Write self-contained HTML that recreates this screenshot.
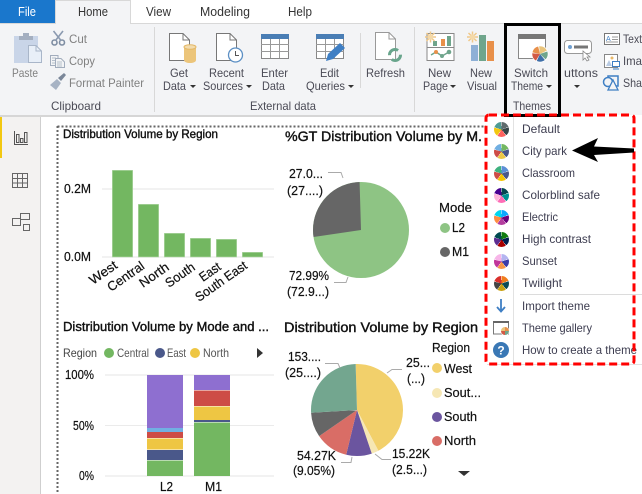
<!DOCTYPE html>
<html><head><meta charset="utf-8">
<style>
html,body{margin:0;padding:0;background:#fff;width:642px;height:494px;overflow:hidden}
svg{position:absolute;left:0;top:0;font-family:"Liberation Sans",sans-serif}
.r{font-size:12px;fill:#4a4a55}
.g{font-size:12px;fill:#808080}
.t{font-size:13px;fill:#333}
.c{font-size:13px;fill:#111;stroke:#111;stroke-width:.2}
.h{fill:#111;stroke:#111;stroke-width:.4}
.m{font-size:12px;fill:#3d3d50}
.ti{position:absolute;left:494px;width:15px;height:15px;border-radius:50%}
</style></head><body>
<svg width="642" height="494" viewBox="0 0 642 494">
<rect width="642" height="494" fill="#fff"/>
<!-- ribbon -->
<rect x="0" y="24" width="642" height="91" fill="#f3f4f6"/>
<rect x="0" y="23" width="642" height="1" fill="#d8d8d8"/>
<rect x="0" y="115" width="642" height="2" fill="#d6d6d6"/>
<rect x="0" y="0" width="55" height="23" fill="#1a77cc"/>
<path d="M55.500 24V0.500H130.500V24" fill="#f3f4f6" stroke="#d8d8d8"/>
<text x="18" y="16" class="t" style="fill:#fff" textLength="18" lengthAdjust="spacingAndGlyphs">File</text>
<text x="78" y="16" class="t" textLength="30" lengthAdjust="spacingAndGlyphs">Home</text>
<text x="146" y="16" class="t" textLength="25" lengthAdjust="spacingAndGlyphs">View</text>
<text x="200" y="16" class="t" textLength="50" lengthAdjust="spacingAndGlyphs">Modeling</text>
<text x="288" y="16" class="t" textLength="24" lengthAdjust="spacingAndGlyphs">Help</text>
<!-- separators -->
<rect x="154" y="27" width="1" height="85" fill="#d8d8d8"/>
<rect x="360" y="33" width="1" height="55" fill="#d8d8d8"/>
<rect x="414" y="27" width="1" height="85" fill="#d8d8d8"/>
<!-- paste icon -->
<rect x="14" y="36" width="24" height="27" fill="#c9d5e8"/>
<path d="M19 40V36H23V33H29V36H33V40Z" fill="#a4afc0"/>
<path d="M28.500 45.500H36L41.500 51V62.500H28.500Z" fill="#e8eff8" stroke="#a9b6c9"/>
<path d="M36 45.500V51H41.500" fill="none" stroke="#a9b6c9"/>
<!-- scissors -->
<g fill="none" stroke="#7f8ea3" stroke-width="1.600"><circle cx="54.500" cy="42.500" r="2.500"/><circle cx="62" cy="42.500" r="2.500"/><path d="M55.500 40.500 63 31M61 40.500 53.500 31" stroke="#8b9ab0"/></g>
<!-- copy -->
<g fill="#f3f4f6" stroke="#a2adbd"><path d="M50.500 55.500H58V65.500H50.500Z"/><path d="M55.500 58.500H61L64.500 62V67.500H55.500Z"/><path d="M52 58H56M52 60.500H55M52 63H55M57 62H62M57 64H62M57 66H62" stroke-width=".8"/></g>
<!-- painter -->
<path d="M50 85 57 79 61 83 56 90Z" fill="#a7b3c4"/><path d="M58 78 64 73 66 75 61 81Z" fill="#7b8799"/>
<text x="12" y="77" class="g" textLength="26" lengthAdjust="spacingAndGlyphs">Paste</text>
<text x="69" y="43" class="g" textLength="18" lengthAdjust="spacingAndGlyphs">Cut</text>
<text x="69" y="65" class="g" textLength="26" lengthAdjust="spacingAndGlyphs">Copy</text>
<text x="69" y="87" class="g" textLength="75" lengthAdjust="spacingAndGlyphs">Format Painter</text>
<text x="51" y="110" class="r" textLength="50" lengthAdjust="spacingAndGlyphs">Clipboard</text>
<!-- get data -->
<path d="M169.500 33.500H183L189.500 40V60.500H169.500Z" fill="#fff" stroke="#777"/><path d="M183 33.500V40H189.500" fill="none" stroke="#777"/>
<path d="M184 47V60C184 64 196 64 196 60V47Z" fill="#ecc57a"/><ellipse cx="190" cy="47" rx="6" ry="2.300" fill="#f3dcae" stroke="#e3b868"/>
<text x="170" y="77" class="r" textLength="18" lengthAdjust="spacingAndGlyphs">Get</text>
<text x="163" y="90" class="r" textLength="23" lengthAdjust="spacingAndGlyphs">Data</text>
<path d="M190 85h6l-3 3z" fill="#333"/>
<!-- recent -->
<path d="M216.500 33.500H230L236.500 40V60.500H216.500Z" fill="#fff" stroke="#777"/><path d="M230 33.500V40H236.500" fill="none" stroke="#777"/>
<circle cx="235.500" cy="55" r="7" fill="#fff" stroke="#5b8fc4" stroke-width="1.300"/><path d="M235.500 51V55.500H239" fill="none" stroke="#555"/>
<text x="209" y="77" class="r" textLength="35" lengthAdjust="spacingAndGlyphs">Recent</text>
<text x="203" y="90" class="r" textLength="40" lengthAdjust="spacingAndGlyphs">Sources</text>
<path d="M246 85h6l-3 3z" fill="#333"/>
<!-- enter data -->
<rect x="261.500" y="34.500" width="27" height="24" fill="#fff" stroke="#888"/><rect x="261" y="34" width="28" height="5" fill="#4a7eb5"/>
<path d="M261 44.500H289M261 51.500H289M270.500 39V58M279.500 39V58" stroke="#999"/>
<text x="261" y="77" class="r" textLength="27" lengthAdjust="spacingAndGlyphs">Enter</text>
<text x="262" y="90" class="r" textLength="23" lengthAdjust="spacingAndGlyphs">Data</text>
<!-- edit queries -->
<rect x="316.500" y="34.500" width="27" height="24" fill="#fff" stroke="#888"/><rect x="316" y="34" width="28" height="5" fill="#4a7eb5"/>
<path d="M316 44.500H344M316 51.500H344M325.500 39V58M334.500 39V58" stroke="#999"/>
<path d="M326 61 328 54 340 43 345 48 333 59Z" fill="#3f7fc4"/>
<text x="320" y="77" class="r" textLength="19" lengthAdjust="spacingAndGlyphs">Edit</text>
<text x="306" y="90" class="r" textLength="39" lengthAdjust="spacingAndGlyphs">Queries</text>
<path d="M348 85h6l-3 3z" fill="#333"/>
<!-- refresh -->
<path d="M375.500 32.500H389L395.500 39V59.500H375.500Z" fill="#fff" stroke="#999"/><path d="M389 32.500V39H395.500" fill="none" stroke="#999"/>
<circle cx="395" cy="55" r="5.500" fill="none" stroke="#68a58c" stroke-width="3" stroke-dasharray="12 5"/>
<text x="366" y="77" class="r" textLength="39" lengthAdjust="spacingAndGlyphs">Refresh</text>
<!-- new page -->
<rect x="427" y="33.500" width="27" height="27" fill="#fff" stroke="#888"/><path d="M427 47.500H454" stroke="#888"/>
<rect x="433" y="41" width="4" height="5" fill="#6fa58c"/><rect x="441" y="39" width="4" height="7" fill="#e8904a"/><rect x="447" y="36" width="4" height="10" fill="#6fa58c"/>
<path d="M431 55 436 52 442 56 449 52" fill="none" stroke="#6fa58c" stroke-width="1.400"/><circle cx="436" cy="52" r="2" fill="#e8904a"/><circle cx="442" cy="56" r="2" fill="#6fa58c"/><circle cx="449" cy="52" r="2.300" fill="#6fa58c"/>
<g stroke="#efc88a" stroke-width="1.500"><path d="M425 37H436M430.500 31.500V42.500M426.500 33 434.500 41M434.500 33 426.500 41"/></g><circle cx="430.500" cy="37" r="2.800" fill="#f4d9a8"/>
<text x="428" y="77" class="r" textLength="23" lengthAdjust="spacingAndGlyphs">New</text>
<text x="423" y="90" class="r" textLength="25" lengthAdjust="spacingAndGlyphs">Page</text>
<path d="M450 85h6l-3 3z" fill="#333"/>
<!-- new visual -->
<rect x="471" y="45" width="7" height="16" fill="#8eb0d6"/><rect x="479" y="35" width="7" height="26" fill="#6fa58c"/><rect x="487" y="41" width="7" height="20" fill="#e8904a"/>
<g stroke="#efc88a" stroke-width="1.500"><path d="M467 37H478M472.500 31.500V42.500M468.500 33 476.500 41M476.500 33 468.500 41"/></g><circle cx="472.500" cy="37" r="2.800" fill="#f4d9a8"/>
<text x="470" y="77" class="r" textLength="22" lengthAdjust="spacingAndGlyphs">New</text>
<text x="467" y="90" class="r" textLength="30" lengthAdjust="spacingAndGlyphs">Visual</text>
<!-- switch theme -->
<rect x="518.500" y="34.500" width="27" height="24" fill="#fff" stroke="#888"/><rect x="518" y="34" width="28" height="5" fill="#777"/>
<circle cx="540" cy="54" r="8.500" fill="#fff"/>
<g fill="none" stroke-width="7.500" transform="rotate(-90 540 54)"><circle cx="540" cy="54" r="4" stroke="#e9c47c" pathLength="100" stroke-dasharray="18 82"/><circle cx="540" cy="54" r="4" stroke="#6fa58c" pathLength="100" stroke-dasharray="18 82" stroke-dashoffset="-20"/><circle cx="540" cy="54" r="4" stroke="#3f6fa8" pathLength="100" stroke-dasharray="18 82" stroke-dashoffset="-40"/><circle cx="540" cy="54" r="4" stroke="#d25a45" pathLength="100" stroke-dasharray="18 82" stroke-dashoffset="-60"/><circle cx="540" cy="54" r="4" stroke="#e8904a" pathLength="100" stroke-dasharray="18 82" stroke-dashoffset="-80"/></g>
<text x="514" y="77" class="r" textLength="34" lengthAdjust="spacingAndGlyphs">Switch</text>
<text x="511" y="90" class="r" textLength="32" lengthAdjust="spacingAndGlyphs">Theme</text>
<path d="M546 85h6l-3 3z" fill="#333"/>
<text x="513" y="110" class="r" textLength="38" lengthAdjust="spacingAndGlyphs">Themes</text>
<!-- buttons -->
<rect x="564.500" y="40.500" width="27" height="13" rx="3" fill="#fff" stroke="#999"/><circle cx="570" cy="47" r="2" fill="#6f9fd0"/><rect x="574" y="45.500" width="14" height="3" fill="#777"/>
<path d="M583 51V60L585 58 587 61 589 60 587 57H590Z" fill="#fff" stroke="#888" stroke-width=".8"/>
<text x="564" y="77" class="r" textLength="34" lengthAdjust="spacingAndGlyphs">uttons</text>
<path d="M574 85h6l-3 3z" fill="#333"/>
<rect x="604.500" y="33.500" width="15" height="11" fill="#fff" stroke="#777"/><path d="M612 37H618M612 39.500H618M606 42H618" stroke="#777" stroke-width=".8"/><text x="606" y="41" font-size="7" fill="#3f7fc4">A</text>
<text x="623" y="43" class="r" textLength="19" lengthAdjust="spacingAndGlyphs">Text</text>
<rect x="604.500" y="54.500" width="13" height="13" fill="#fff" stroke="#888"/><path d="M606 66 609 60 612 66Z" fill="#b9cbe3"/><circle cx="612" cy="58" r="1.500" fill="#e8b86a"/><rect x="612.500" y="61.500" width="7" height="5" fill="#fff" stroke="#3f7fc4"/><path d="M613 69H619" stroke="#3f7fc4"/>
<text x="623" y="65" class="r" textLength="19" lengthAdjust="spacingAndGlyphs">Ima</text>
<rect x="608" y="76" width="10" height="10" fill="none" stroke="#3f7fc4" stroke-width="1.500"/><circle cx="608" cy="82" r="4.500" fill="#f3f4f6" stroke="#3f7fc4" stroke-width="1.500"/><path d="M613 80 618 90H608Z" fill="#f3f4f6" stroke="#3f7fc4" stroke-width="1.300"/>
<text x="623" y="87" class="r" textLength="19" lengthAdjust="spacingAndGlyphs">Sha</text>
<text x="250" y="110" class="r" textLength="66" lengthAdjust="spacingAndGlyphs">External data</text>
<!-- left nav -->
<rect x="0" y="117" width="40" height="377" fill="#f3f2f1"/>
<rect x="40" y="117" width="1" height="377" fill="#cfcfcf"/>
<rect x="0" y="117" width="2" height="41" fill="#f2c811"/>
<g fill="none" stroke="#555"><path d="M14.500 131V144.500H28"/><rect x="16.500" y="134.500" width="2.500" height="8"/><rect x="20.500" y="138.500" width="2.500" height="4"/><rect x="24.500" y="132.500" width="2.500" height="10"/></g>
<g fill="none" stroke="#666"><rect x="12.500" y="173.500" width="15" height="14"/><path d="M12 178.500H28M12 183H28M17.500 173V188M22.500 173V188"/></g>
<g fill="#f3f2f1" stroke="#666"><rect x="20.500" y="213.500" width="9" height="6"/><rect x="23.500" y="224.500" width="6" height="6"/><rect x="12.500" y="218.500" width="8" height="7"/></g>
<!-- report dotted frame -->
<path d="M57.500 126.500H486M57.500 126V494" fill="none" stroke="#666" stroke-width="2" stroke-dasharray="2 2"/>
<!-- chart 1 -->
<text x="63" y="138" class="h" font-size="12" textLength="155" lengthAdjust="spacingAndGlyphs">Distribution Volume by Region</text>
<rect x="102" y="188" width="172" height="2" fill="#f2f2f2"/><rect x="102" y="256" width="172" height="2" fill="#f2f2f2"/>
<g fill="#73b761" stroke="#b7dbae" stroke-width=".6"><rect x="112.300" y="170.300" width="20.400" height="86.700"/><rect x="138.300" y="204.300" width="20.400" height="52.700"/><rect x="164.300" y="233.300" width="20.400" height="23.700"/><rect x="190.300" y="238.300" width="20.400" height="18.700"/><rect x="216.300" y="239.300" width="20.400" height="17.700"/><rect x="242.300" y="252.300" width="20.400" height="4.700"/></g>
<text x="64" y="193" class="c" textLength="27" lengthAdjust="spacingAndGlyphs">0.2M</text>
<text x="64" y="261" class="c" textLength="27" lengthAdjust="spacingAndGlyphs">0.0M</text>
<g class="c">
<text transform="translate(93 285) rotate(-35)" textLength="31" lengthAdjust="spacingAndGlyphs">West</text>
<text transform="translate(111 292) rotate(-35)" textLength="42" lengthAdjust="spacingAndGlyphs">Central</text>
<text transform="translate(143 288) rotate(-35)" textLength="33" lengthAdjust="spacingAndGlyphs">North</text>
<text transform="translate(169 288) rotate(-35)" textLength="33" lengthAdjust="spacingAndGlyphs">South</text>
<text transform="translate(203 282) rotate(-35)" textLength="23" lengthAdjust="spacingAndGlyphs">East</text>
<text transform="translate(199 302) rotate(-35)" textLength="60" lengthAdjust="spacingAndGlyphs">South East</text>
</g>
<!-- chart 2 -->
<text x="285" y="141" class="h" font-size="14" textLength="197" lengthAdjust="spacingAndGlyphs">%GT Distribution Volume by M.</text>
<circle cx="361" cy="230" r="48" fill="#8ec484"/>
<circle cx="361" cy="230" r="24" fill="none" stroke="#666" stroke-width="48" pathLength="100" stroke-dasharray="27 73" stroke-dashoffset="-73" transform="rotate(-90 361 230)"/>
<path d="M328 172.500H341L343 178M334 282.500H346L348 277" fill="none" stroke="#aaa"/>
<text x="289" y="178" class="c" textLength="34" lengthAdjust="spacingAndGlyphs">27.0...</text>
<text x="287" y="195" class="c" textLength="36" lengthAdjust="spacingAndGlyphs">(27....)</text>
<text x="289" y="280" class="c" textLength="40" lengthAdjust="spacingAndGlyphs">72.99%</text>
<text x="287" y="296" class="c" textLength="42" lengthAdjust="spacingAndGlyphs">(72.9...)</text>
<text x="439" y="212" class="c" textLength="33" lengthAdjust="spacingAndGlyphs">Mode</text>
<circle cx="445" cy="228" r="5" fill="#8ec484"/><text x="452" y="232" class="c" textLength="13" lengthAdjust="spacingAndGlyphs">L2</text>
<circle cx="445" cy="252" r="5" fill="#666"/><text x="452" y="256" class="c" textLength="17" lengthAdjust="spacingAndGlyphs">M1</text>
<!-- chart 3 -->
<text x="63" y="331" class="h" font-size="13" textLength="206" lengthAdjust="spacingAndGlyphs">Distribution Volume by Mode and ...</text>
<text x="63" y="357" class="r" style="fill:#444" textLength="34" lengthAdjust="spacingAndGlyphs">Region</text>
<circle cx="109" cy="353" r="5" fill="#73b761"/><text x="117" y="357" class="r" style="fill:#555" textLength="32" lengthAdjust="spacingAndGlyphs">Central</text>
<circle cx="160" cy="353" r="5" fill="#4a588a"/><text x="167" y="357" class="r" style="fill:#555" textLength="19" lengthAdjust="spacingAndGlyphs">East</text>
<circle cx="195" cy="353" r="5" fill="#eec643"/><text x="203" y="357" class="r" style="fill:#555" textLength="26" lengthAdjust="spacingAndGlyphs">North</text>
<path d="M257 348 263 353 257 358Z" fill="#333"/>
<rect x="105" y="374" width="169" height="2" fill="#f2f2f2"/><rect x="105" y="425" width="169" height="1" fill="#ebebeb"/><rect x="105" y="475" width="169" height="2" fill="#f2f2f2"/>
<rect x="147" y="375" width="36" height="53" fill="#8e6fd0"/><rect x="147" y="428" width="36" height="4" fill="#71afe2"/><rect x="147" y="432" width="36" height="6" fill="#cd4c46"/><rect x="147" y="438.500" width="36" height="11" fill="#eec643"/><rect x="147" y="450" width="36" height="10" fill="#4a588a"/><rect x="147" y="460.500" width="36" height="15.500" fill="#73b761"/>
<rect x="194" y="375" width="36" height="15" fill="#8e6fd0"/><rect x="194" y="390.500" width="36" height="15.500" fill="#cd4c46"/><rect x="194" y="406.500" width="36" height="13.500" fill="#eec643"/><rect x="194" y="420" width="36" height="2" fill="#4a588a"/><rect x="194" y="422.500" width="36" height="53.500" fill="#73b761"/>
<text x="65" y="379" class="c" textLength="29" lengthAdjust="spacingAndGlyphs">100%</text>
<text x="73" y="430" class="c" textLength="21" lengthAdjust="spacingAndGlyphs">50%</text>
<text x="79" y="480" class="c" textLength="15" lengthAdjust="spacingAndGlyphs">0%</text>
<text x="160" y="491" class="c" textLength="13" lengthAdjust="spacingAndGlyphs">L2</text>
<text x="205" y="491" class="c" textLength="17" lengthAdjust="spacingAndGlyphs">M1</text>
<!-- chart 4 -->
<text x="284" y="332" class="h" font-size="14" textLength="194" lengthAdjust="spacingAndGlyphs">Distribution Volume by Region</text>
<g transform="rotate(-90 357 410)" fill="none" stroke-width="46">
<circle cx="357" cy="410" r="23" stroke="#f2d06b" pathLength="100" stroke-dasharray="42.500 57.500"/>
<circle cx="357" cy="410" r="23" stroke="#f6e7b4" pathLength="100" stroke-dasharray="2.500 97.500" stroke-dashoffset="-42.500"/>
<circle cx="357" cy="410" r="23" stroke="#6b559f" pathLength="100" stroke-dasharray="9.050 90.950" stroke-dashoffset="-45"/>
<circle cx="357" cy="410" r="23" stroke="#d96d66" pathLength="100" stroke-dasharray="11.650 88.350" stroke-dashoffset="-54.050"/>
<circle cx="357" cy="410" r="23" stroke="#666" pathLength="100" stroke-dasharray="8.700 91.300" stroke-dashoffset="-65.700"/>
<circle cx="357" cy="410" r="23" stroke="#73a68f" pathLength="100" stroke-dasharray="25.600 74.400" stroke-dashoffset="-74.400"/>
</g>
<path d="M325 363.500H338L340 368M387 373 392 369.500H402M341 462.500H351L352 457M375 454 382 459.500H391" fill="none" stroke="#aaa"/>
<text x="288" y="361" class="c" textLength="33" lengthAdjust="spacingAndGlyphs">153....</text>
<text x="285" y="377" class="c" textLength="36" lengthAdjust="spacingAndGlyphs">(25....)</text>
<text x="406" y="367" class="c" textLength="24" lengthAdjust="spacingAndGlyphs">25...</text>
<text x="407" y="383" class="c" textLength="18" lengthAdjust="spacingAndGlyphs">(...)</text>
<text x="297" y="460" class="c" textLength="39" lengthAdjust="spacingAndGlyphs">54.27K</text>
<text x="293" y="475" class="c" textLength="42" lengthAdjust="spacingAndGlyphs">(9.05%)</text>
<text x="392" y="458" class="c" textLength="38" lengthAdjust="spacingAndGlyphs">15.22K</text>
<text x="392" y="474" class="c" textLength="35" lengthAdjust="spacingAndGlyphs">(2.5...)</text>
<text x="432" y="352" class="c" textLength="38" lengthAdjust="spacingAndGlyphs">Region</text>
<circle cx="437" cy="368" r="5" fill="#f2d06b"/><text x="444" y="373" class="c" textLength="28" lengthAdjust="spacingAndGlyphs">West</text>
<circle cx="437" cy="393" r="5" fill="#f6e7b4"/><text x="444" y="397" class="c" textLength="37" lengthAdjust="spacingAndGlyphs">Sout...</text>
<circle cx="437" cy="417" r="5" fill="#6b559f"/><text x="444" y="421" class="c" textLength="33" lengthAdjust="spacingAndGlyphs">South</text>
<circle cx="437" cy="441" r="5" fill="#d96d66"/><text x="444" y="445" class="c" textLength="32" lengthAdjust="spacingAndGlyphs">North</text>
<path d="M458 471H470L464 476Z" fill="#333"/>
<!-- menu -->
<rect x="487" y="115" width="155" height="251" fill="#fff"/>
<rect x="513" y="117" width="1" height="247" fill="#e2e2e2"/>
<rect x="520" y="294" width="122" height="1" fill="#dcdcdc"/>
<rect x="487" y="364" width="155" height="1" fill="#e2e2e2"/>
<text x="522" y="133" class="m" textLength="38" lengthAdjust="spacingAndGlyphs">Default</text>
<text x="522" y="155" class="m" textLength="45" lengthAdjust="spacingAndGlyphs">City park</text>
<text x="522" y="177" class="m" textLength="53" lengthAdjust="spacingAndGlyphs">Classroom</text>
<text x="522" y="199" class="m" textLength="78" lengthAdjust="spacingAndGlyphs">Colorblind safe</text>
<text x="522" y="221" class="m" textLength="36" lengthAdjust="spacingAndGlyphs">Electric</text>
<text x="522" y="243" class="m" textLength="69" lengthAdjust="spacingAndGlyphs">High contrast</text>
<text x="522" y="265" class="m" textLength="35" lengthAdjust="spacingAndGlyphs">Sunset</text>
<text x="522" y="287" class="m" textLength="40" lengthAdjust="spacingAndGlyphs">Twilight</text>
<text x="522" y="310" class="m" textLength="68" lengthAdjust="spacingAndGlyphs">Import theme</text>
<text x="522" y="332" class="m" textLength="70" lengthAdjust="spacingAndGlyphs">Theme gallery</text>
<text x="522" y="354" class="m" textLength="115" lengthAdjust="spacingAndGlyphs">How to create a theme</text>
<path d="M501 299V311M497 307 501 311.500 505 307" fill="none" stroke="#3f7fc4" stroke-width="1.800"/>
<rect x="493.500" y="322" width="15" height="12" fill="#fff" stroke="#777"/><rect x="493" y="321" width="16" height="2" fill="#666"/>
<circle cx="505" cy="331" r="4.500" fill="#fff"/><path d="M505 331V327A4 4 0 0 1 509 331Z" fill="#e8904a"/><path d="M505 331H509A4 4 0 0 1 505 335Z" fill="#6fa58c"/><path d="M505 331V335A4 4 0 0 1 501 331Z" fill="#d25a45"/><path d="M505 331H501A4 4 0 0 1 505 327Z" fill="#e9c47c"/>
<circle cx="501" cy="350" r="8" fill="#3a78b5"/><text x="501" y="354.500" text-anchor="middle" font-size="12" font-weight="bold" fill="#fff">?</text>
<!-- black & red frames -->
<rect x="505.500" y="24.500" width="54" height="91" fill="none" stroke="#000" stroke-width="3"/>
<rect x="486" y="115" width="148" height="249" rx="3" fill="none" stroke="#f00" stroke-width="3" stroke-dasharray="8 4"/>
<path d="M572 150.500 598 138 594 146.500 634 148.500V152.500L594 155 598 162Z" fill="#000"/>
</svg>
<div class="ti" style="top:122px;background:conic-gradient(#5f6b6d 0 68deg,#fff 0 72deg,#374649 0 140deg,#fff 0 144deg,#fd625e 0 212deg,#fff 0 216deg,#f2c80f 0 284deg,#fff 0 288deg,#4f9c94 0 356deg,#fff 0)"></div>
<div class="ti" style="top:144px;background:conic-gradient(#73b761 0 68deg,#fff 0 72deg,#4a588a 0 140deg,#fff 0 144deg,#ecc846 0 212deg,#fff 0 216deg,#cd4c46 0 284deg,#fff 0 288deg,#71afe2 0 356deg,#fff 0)"></div>
<div class="ti" style="top:166px;background:conic-gradient(#5b8fd6 0 68deg,#fff 0 72deg,#4a588a 0 140deg,#fff 0 144deg,#f5c400 0 212deg,#fff 0 216deg,#cd4c46 0 284deg,#fff 0 288deg,#3fb27f 0 356deg,#fff 0)"></div>
<div class="ti" style="top:188px;background:conic-gradient(#074650 0 68deg,#fff 0 72deg,#009292 0 140deg,#fff 0 144deg,#fe6db6 0 212deg,#fff 0 216deg,#feb5da 0 284deg,#fff 0 288deg,#480091 0 356deg,#fff 0)"></div>
<div class="ti" style="top:210px;background:conic-gradient(#0ba7ff 0 68deg,#fff 0 72deg,#6b007b 0 140deg,#fff 0 144deg,#b33d9e 0 212deg,#fff 0 216deg,#ff8c42 0 284deg,#fff 0 288deg,#00d6f0 0 356deg,#fff 0)"></div>
<div class="ti" style="top:232px;background:conic-gradient(#107c10 0 68deg,#fff 0 72deg,#002050 0 140deg,#fff 0 144deg,#a80000 0 212deg,#fff 0 216deg,#5c2d91 0 284deg,#fff 0 288deg,#004b50 0 356deg,#fff 0)"></div>
<div class="ti" style="top:254px;background:conic-gradient(#b4b4f0 0 68deg,#fff 0 72deg,#3c3ca8 0 140deg,#fff 0 144deg,#f79646 0 212deg,#fff 0 216deg,#c0359a 0 284deg,#fff 0 288deg,#f7b5e8 0 356deg,#fff 0)"></div>
<div class="ti" style="top:276px;background:conic-gradient(#f07d1e 0 68deg,#fff 0 72deg,#0b4a55 0 140deg,#fff 0 144deg,#c9a010 0 212deg,#fff 0 216deg,#444 0 284deg,#fff 0 288deg,#d9302c 0 356deg,#fff 0)"></div>
</body></html>
